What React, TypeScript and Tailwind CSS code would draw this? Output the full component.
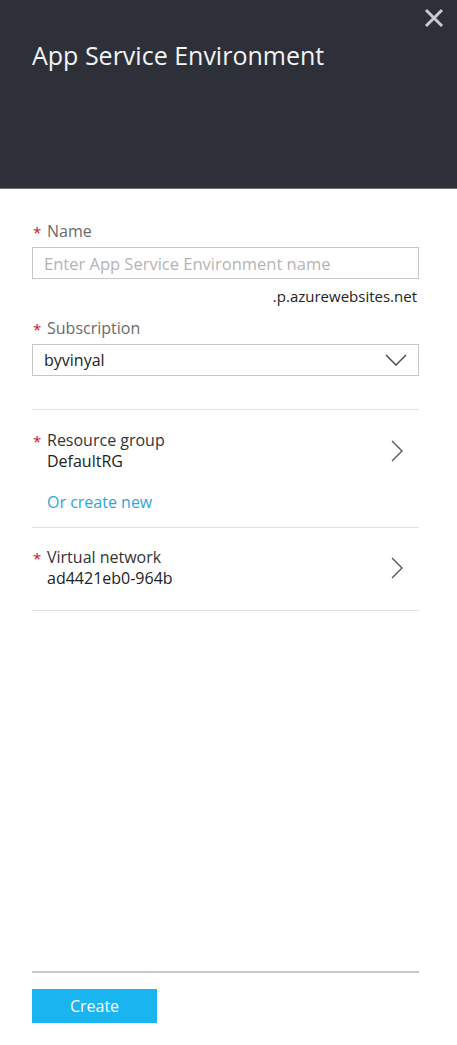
import React from "react";

function Star() {
  return <span className="text-[#c4122f] text-[15px] w-[15px] leading-none relative top-[1px] pl-[1px]">*</span>;
}

function ChevronRight() {
  return (
    <svg width="12" height="22" viewBox="0 0 12 22" fill="none" stroke="#555" strokeWidth="1.4">
      <path d="M1 1 L11 11 L1 21" />
    </svg>
  );
}

function PickerRow({ label, value }: { label: string; value: string }) {
  return (
    <div className="flex items-center justify-between pr-[16px]">
      <div className="flex flex-col">
        <div className="flex items-center text-[16px] text-[#333] leading-[21px]">
          <Star />
          {label}
        </div>
        <div className="pl-[15px] text-[16px] text-[#222] leading-[21px]">{value}</div>
      </div>
      <ChevronRight />
    </div>
  );
}

export default function App() {
  return (
    <div
      className="w-[457px] h-[1045px] bg-white flex flex-col"
      style={{ fontFamily: '"Segoe UI", "Open Sans", sans-serif' }}
    >
      <div className="h-[189px] bg-[#2d3039] border-b border-[#6b6d72] relative shrink-0">
        <button className="absolute right-[12px] top-[7px] text-[#c9cacc]">
          <svg width="22" height="22" viewBox="0 0 22 22" stroke="currentColor" strokeWidth="3">
            <path d="M3 3 L19 19 M19 3 L3 19" />
          </svg>
        </button>
        <h1 className="pt-[37px] pl-[32px] text-[25px] text-[#f4f4f4] font-normal leading-[36px]">
          App Service Environment
        </h1>
      </div>

      <div className="flex flex-col flex-1 pl-[32px] pr-[38px] pt-[32px]">
        <div className="flex items-center text-[16px] text-[#6a6a6a] leading-[21px]">
          <Star />
          Name
        </div>
        <input
          placeholder="Enter App Service Environment name"
          className="mt-[5px] h-[32px] w-full border border-[#c6c6c6] px-[11px] text-[16.5px] placeholder:text-[#b4b4b4] outline-none"
        />
        <div className="text-right pr-[2px] mt-[7px] text-[15px] text-[#222] leading-[20px]">
          .p.azurewebsites.net
        </div>
        <div className="flex items-center mt-[12px] text-[16px] text-[#6a6a6a] leading-[21px]">
          <Star />
          Subscription
        </div>
        <div className="mt-[5px] h-[32px] w-full border border-[#c6c6c6] pl-[11px] pr-[11px] flex items-center justify-between">
          <span className="text-[16px] text-[#222]">byvinyal</span>
          <svg width="22" height="12" viewBox="0 0 22 12" fill="none" stroke="#444" strokeWidth="1.4">
            <path d="M1 1 L11 11 L21 1" />
          </svg>
        </div>

        <div className="mt-[33px] border-t border-[#e1e1e1]" />
        <div className="pt-[20px]">
          <PickerRow label="Resource group" value="DefaultRG" />
          <div className="pl-[15px] mt-[20px] text-[16px] text-[#2ea6d6] leading-[21px]">Or create new</div>
        </div>
        <div className="mt-[14px] border-t border-[#e1e1e1]" />
        <div className="pt-[19px] pb-[21px]">
          <PickerRow label="Virtual network" value="ad4421eb0-964b" />
        </div>
        <div className="border-t border-[#e1e1e1]" />

        <div className="flex-1" />
        <div className="border-t-2 border-[#c8c8c8]" />
        <button className="mt-[16px] mb-[22px] w-[125px] h-[34px] bg-[#1ab5ee] text-white text-[16px]">
          Create
        </button>
      </div>
    </div>
  );
}
